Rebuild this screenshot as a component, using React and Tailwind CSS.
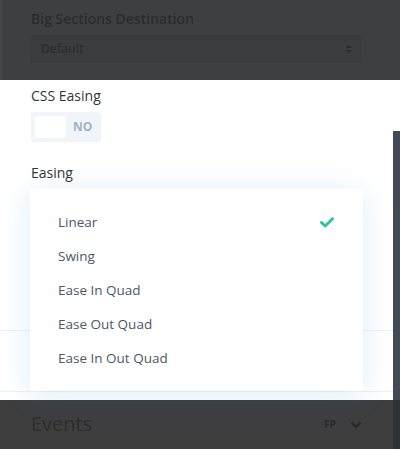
export default function App() {
  const items = ["Linear", "Swing", "Ease In Quad", "Ease Out Quad", "Ease In Out Quad"];
  return (
    <div className="relative w-[400px] h-[449px] overflow-hidden bg-white" style={{ fontFamily: '"Open Sans", sans-serif' }}>
      {/* top dimmed area */}
      <div className="h-[80px] bg-[#3e3f41] border-l-2 border-[#46474a] pl-[29px] pr-[38px] pt-[9px]">
        <div className="text-[14px] leading-[20px] font-semibold text-[#2b2c2e] blur-[0.6px]">Big Sections Destination</div>
        <div className="mt-[6px] h-[28px] bg-[#3b3c3e] rounded-[3px] flex items-center justify-between pl-[10px] pr-[10px]">
          <span className="text-[12px] font-semibold text-[#2c2d2f] blur-[0.6px]">Default</span>
          <svg width="6" height="10" viewBox="0 0 6 10" className="blur-[0.4px]">
            <path d="M0 4 L3 1 L6 4 Z" fill="#2a2b2d" />
            <path d="M0 6 L3 9 L6 6 Z" fill="#2a2b2d" />
          </svg>
        </div>
      </div>

      {/* white panel */}
      <div className="relative h-[320px] bg-white">
        <div className="pl-[31px] pt-[6px]">
          <div className="text-[14px] leading-[20px] text-[#32373c]">CSS Easing</div>
          <div className="mt-[6px] w-[70px] h-[30px] rounded-[3px] bg-[#f1f5f9] flex items-center pl-[4px]">
            <div className="w-[31px] h-[22px] rounded-[3px] bg-white"></div>
            <span className="ml-[7px] text-[12px] font-bold text-[#a3b1c2]">NO</span>
          </div>
          <div className="mt-[21px] text-[14px] leading-[20px] text-[#32373c]">Easing</div>
        </div>
        <div className="absolute left-0 right-[7px] top-[250px] h-px bg-[#eef1f4]"></div>
        <div className="absolute left-0 right-[7px] top-[311px] h-px bg-[#eef1f4]"></div>

        {/* dropdown */}
        <div className="absolute left-[30px] top-[109px] w-[333px] h-[202px] bg-white rounded-[3px] shadow-[0_5px_30px_rgba(43,135,218,0.15)] pt-[16px]">
          {items.map((it, i) => (
            <div key={it} className="h-[34px] flex items-center justify-between pl-[28px] pr-[29px]">
              <span className="text-[13.5px] text-[#4c5866]">{it}</span>
              {i === 0 && (
                <svg width="14" height="11" viewBox="0 0 14 11">
                  <path d="M1.5 5.5 L5.2 9 L12.5 1.8" fill="none" stroke="#2ec3a6" strokeWidth="3" strokeLinecap="round" strokeLinejoin="round" />
                </svg>
              )}
            </div>
          ))}
        </div>
      </div>

      {/* bottom dimmed area */}
      <div className="h-[49px] bg-[#3e3e3f] pl-[31px] pr-[38px] flex items-center justify-between">
        <span className="text-[20px] text-[#2d2d2e] blur-[0.6px] mt-[-2px]">Events</span>
        <div className="flex items-center gap-[14px] blur-[0.5px]">
          <span className="text-[10px] font-bold text-[#2a2a2b]">FP</span>
          <svg width="12" height="8" viewBox="0 0 12 8">
            <path d="M1.5 1.5 L6 6 L10.5 1.5" fill="none" stroke="#2a2a2b" strokeWidth="2.5" />
          </svg>
        </div>
      </div>

      {/* scrollbar */}
      <div className="absolute right-0 top-[131px] w-[7px] h-[269px] bg-[#434a55]"></div>
      <div className="absolute right-0 top-[400px] w-[7px] h-[49px] bg-[#2e3135]"></div>
    </div>
  );
}
